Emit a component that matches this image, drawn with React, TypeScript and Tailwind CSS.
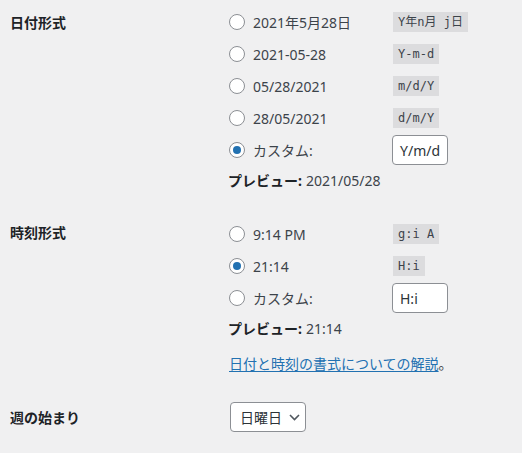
import React from 'react';

const font = "font-['Noto_Sans','Noto_Sans_CJK_JP',sans-serif]";

function Radio({ checked = false }: { checked?: boolean }) {
  return (
    <span className="w-4 h-4 rounded-full border border-[#8c8f94] bg-white flex items-center justify-center shrink-0">
      {checked && <span className="w-2 h-2 rounded-full bg-[#2271b1]" />}
    </span>
  );
}

function Code({ children }: { children: React.ReactNode }) {
  return (
    <code className="bg-[#dcdcde] text-[#3c434a] text-[12px] leading-[20px] px-[5px] font-['DejaVu_Sans_Mono','Noto_Sans_CJK_JP',monospace]">
      {children}
    </code>
  );
}

function Option({ label, code, checked, input }: { label: string; code?: string; checked?: boolean; input?: string }) {
  return (
    <div className="h-[32px] flex items-center">
      <Radio checked={checked} />
      <span className="ml-2 w-[140px] text-[14px] text-[#3c434a]">{label}</span>
      {code && <Code>{code}</Code>}
      {input && (
        <span className="-ml-px w-[56px] h-[30px] border border-[#8c8f94] rounded bg-white flex items-center px-[7px] text-[14px] text-[#2c3338]">
          {input}
        </span>
      )}
    </div>
  );
}

function Preview({ value }: { value: string }) {
  return (
    <div className="h-[28px] flex items-center -ml-px text-[14px] text-[#3c434a]">
      <span className="font-bold text-[#1d2327]">プレビュー:</span>
      <span className="ml-1">{value}</span>
    </div>
  );
}

export default function App() {
  return (
    <div className={`w-[522px] h-[453px] bg-[#f0f0f1] ${font} overflow-hidden`}>
      <div className="flex">
        <div className="w-[219px] pl-[10px] pt-[12px] text-[14px] font-bold text-[#1d2327]">日付形式</div>
        <div className="pt-[6px] pl-[10px]">
          <Option label="2021年5月28日" code="Y年n月 j日" />
          <Option label="2021-05-28" code="Y-m-d" />
          <Option label="05/28/2021" code="m/d/Y" />
          <Option label="28/05/2021" code="d/m/Y" />
          <Option label="カスタム:" checked input="Y/m/d" />
          <Preview value="2021/05/28" />
        </div>
      </div>

      <div className="flex pt-[24px]">
        <div className="w-[219px] pl-[10px] pt-[4px] text-[14px] font-bold text-[#1d2327]">時刻形式</div>
        <div className="pl-[10px]">
          <Option label="9:14 PM" code="g:i A" />
          <Option label="21:14" checked code="H:i" />
          <Option label="カスタム:" input="H:i" />
          <Preview value="21:14" />
          <div className="mt-[7px] h-[28px] flex items-center text-[14px] text-[#3c434a]">
            <a className="text-[#2271b1] underline underline-offset-2">日付と時刻の書式についての解説</a>
            <span>。</span>
          </div>
        </div>
      </div>

      <div className="flex items-center mt-[25px]">
        <div className="w-[230px] pl-[10px] text-[14px] font-bold text-[#1d2327]">週の始まり</div>
        <div className="w-[76px] h-[30px] border border-[#8c8f94] rounded bg-white flex items-center pl-[9px] text-[14px] text-[#2c3338]">
          <span>日曜日</span>
          <svg className="ml-[7px]" width="11" height="7" viewBox="0 0 11 7" fill="none">
            <path d="M1 1l4.5 4.5L10 1" stroke="#50575e" strokeWidth="1.6" />
          </svg>
        </div>
      </div>
    </div>
  );
}
